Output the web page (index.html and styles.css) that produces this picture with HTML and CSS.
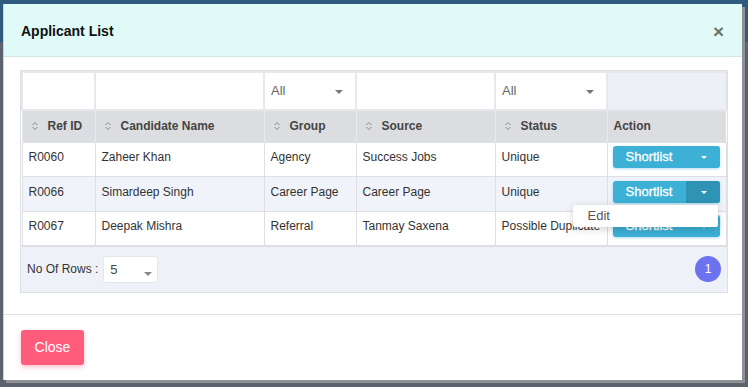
FILE: index.html
```html
<!DOCTYPE html>
<html lang="en">
<head>
    <meta charset="UTF-8">
    <title>Applicant List</title>
    <link rel="stylesheet" href="styles.css">
</head>
<body>
    <div class="modal">
        <div class="modal-header">
            <h4>Applicant List</h4>
            <span class="close-x">&times;</span>
        </div>
        <div class="modal-body">
            <div class="grid">
                <table>
                    <colgroup>
                        <col style="width:73px"><col style="width:169px"><col style="width:92px">
                        <col style="width:139px"><col style="width:112px"><col>
                    </colgroup>
                    <tr class="filter">
                        <td><div class="box"></div></td>
                        <td><div class="box"></div></td>
                        <td><div class="box sel">All<i class="caret"></i></div></td>
                        <td><div class="box"></div></td>
                        <td><div class="box sel">All<i class="caret"></i></div></td>
                        <td class="blank"></td>
                    </tr>
                    <tr class="head">
                        <th><svg class="sort" viewBox="0 0 8 10"><path d="M1.5 4 4 1.5 6.5 4M1.5 6 4 8.5 6.5 6"/></svg>Ref ID</th>
                        <th><svg class="sort" viewBox="0 0 8 10"><path d="M1.5 4 4 1.5 6.5 4M1.5 6 4 8.5 6.5 6"/></svg>Candidate Name</th>
                        <th><svg class="sort" viewBox="0 0 8 10"><path d="M1.5 4 4 1.5 6.5 4M1.5 6 4 8.5 6.5 6"/></svg>Group</th>
                        <th><svg class="sort" viewBox="0 0 8 10"><path d="M1.5 4 4 1.5 6.5 4M1.5 6 4 8.5 6.5 6"/></svg>Source</th>
                        <th><svg class="sort" viewBox="0 0 8 10"><path d="M1.5 4 4 1.5 6.5 4M1.5 6 4 8.5 6.5 6"/></svg>Status</th>
                        <th class="plain">Action</th>
                    </tr>
                    <tr>
                        <td>R0060</td><td>Zaheer Khan</td><td>Agency</td><td>Success Jobs</td><td>Unique</td>
                        <td class="act"><div class="btn-group"><span class="main">Shortlist</span><span class="toggle"><i></i></span></div></td>
                    </tr>
                    <tr class="alt">
                        <td>R0066</td><td>Simardeep Singh</td><td>Career Page</td><td>Career Page</td><td>Unique</td>
                        <td class="act"><div class="btn-group open"><span class="main">Shortlist</span><span class="toggle"><i></i></span>
                            <div class="menu">Edit</div></div></td>
                    </tr>
                    <tr>
                        <td>R0067</td><td>Deepak Mishra</td><td>Referral</td><td>Tanmay Saxena</td><td class="clip">Possible Duplicate</td>
                        <td class="act"><div class="btn-group"><span class="main">Shortlist</span><span class="toggle"><i></i></span></div></td>
                    </tr>
                </table>
                <div class="pager">
                    <label>No Of Rows :</label>
                    <div class="rows">5<i class="caret"></i></div>
                    <span class="page">1</span>
                </div>
            </div>
        </div>
        <div class="modal-footer">
            <button class="btn-close">Close</button>
        </div>
    </div>
</body>
</html>
```

FILE: styles.css
```css
* {
    margin: 0;
    padding: 0;
    box-sizing: border-box;
}
body {
    font-family: "Liberation Sans", Arial, sans-serif;
    font-size: 12px;
    color: #333;
    background: linear-gradient(#2f5a7d 0, #2f5a7d 42px, #5c636e 42px);
    height: 387px;
    overflow: hidden;
    padding: 4px 0 0 3px;
}
/* 弹窗 */
.modal {
    width: 739px;
    height: 376px;
    background: #fff;
    border-left: 1px solid #cfd3d8;
    box-shadow: 3px 3px 0 #8f9196;
}
.modal-header {
    height: 53px;
    background: #e0fbf7;
    border-bottom: 1px solid #d3e4e4;
    display: flex;
    align-items: center;
    justify-content: space-between;
    padding: 2px 18px 0 17px;
}
.modal-header h4 {
    font-size: 14px;
    font-weight: bold;
    color: #111;
}
.close-x {
    font-size: 19px;
    font-weight: bold;
    color: #707070;
    line-height: 1;
}
.modal-body {
    padding: 13px 14px 21px 16px;
}
.grid {
    border: 1px solid #dcdfe4;
}
table {
    width: 100%;
    border-collapse: collapse;
    table-layout: fixed;
}
td, th {
    text-align: left;
    white-space: nowrap;
    overflow: hidden;
}
/* 筛选行 */
.filter td {
    height: 38px;
    border: 2px solid #e6e8ec;
    background: #fff;
    padding: 0;
}
.filter td.blank {
    background: #edf0f5;
}
.box {
    height: 34px;
    position: relative;
    font-size: 13px;
    color: #666;
    line-height: 34px;
    padding-left: 6px;
}
.caret {
    position: absolute;
    right: 12px;
    top: 16px;
    border-left: 4px solid transparent;
    border-right: 4px solid transparent;
    border-top: 4px solid #777;
}
/* 表头 */
.head th {
    height: 32px;
    background: #dcdde1;
    border-left: 1px solid #e9eaed;
    font-weight: bold;
    color: #444;
    padding: 0 0 1px 6px;
}
.sort {
    width: 8px;
    height: 10px;
    margin: 0 9px 0 2px;
    vertical-align: -1px;
    fill: none;
    stroke: #888;
    stroke-width: 1;
}
/* 数据行 */
tr td {
    height: 34px;
    border: 1px solid #dedfe3;
    padding: 0 6px;
    vertical-align: middle;
}
tr.alt td {
    height: 35px;
}
tr:not(.filter) td {
    padding-bottom: 4px;
}
tr.alt td {
    background: #f0f3fa;
}
td.clip {
    overflow: visible;
}
td.act {
    padding: 0 6px 4px 5px;
    overflow: visible;
}
.btn-group {
    position: relative;
    display: flex;
    height: 22px;
    border-radius: 3px;
    background: #3cb0d5;
    color: #fff;
    font-size: 13px;
    box-shadow: 0 1px 3px rgba(60, 176, 213, 0.4);
}
.btn-group .main {
    width: 73px;
    line-height: 22px;
    text-align: center;
    -webkit-text-stroke: 0.3px #fff;
}
.btn-group .toggle {
    flex: 1;
    position: relative;
    border-radius: 0 3px 3px 0;
}
.btn-group.open .toggle {
    background: #2e93b4;
}
.toggle i {
    position: absolute;
    left: 15px;
    top: 10px;
    border-left: 3px solid transparent;
    border-right: 3px solid transparent;
    border-top: 3px solid #fff;
}
.menu {
    position: absolute;
    top: 24px;
    right: 2px;
    width: 145px;
    height: 22px;
    background: #fff;
    color: #555;
    font-size: 13px;
    line-height: 22px;
    padding-left: 15px;
    border-radius: 2px;
    box-shadow: 0 2px 8px rgba(0, 0, 0, 0.18);
    z-index: 2;
}
/* 分页 */
.pager {
    height: 46px;
    background: #eef1f8;
    display: flex;
    align-items: center;
    padding: 0 6px 0 6px;
    border-top: 1px solid #dedfe3;
}
.pager label {
    margin-right: 5px;
}
.rows {
    position: relative;
    width: 55px;
    height: 27px;
    background: #fff;
    border: 1px solid #e3e6ec;
    border-radius: 3px;
    font-size: 13px;
    color: #444;
    line-height: 25px;
    padding-left: 6px;
}
.rows .caret {
    right: 5px;
    top: 15px;
    border-top-color: #888;
}
.page {
    margin-left: auto;
    width: 26px;
    height: 26px;
    border-radius: 50%;
    background: #6d72f1;
    color: #fff;
    text-align: center;
    line-height: 26px;
    font-size: 12px;
}
.modal-footer {
    border-top: 1px solid #e0e0e0;
    padding: 15px 17px;
}
.btn-close {
    width: 63px;
    height: 35px;
    border: none;
    border-radius: 3px;
    background: #ff5c7c;
    color: #fff;
    font-family: "Liberation Sans", Arial, sans-serif;
    font-size: 14px;
    box-shadow: 0 2px 5px rgba(255, 92, 124, 0.4);
}
```
